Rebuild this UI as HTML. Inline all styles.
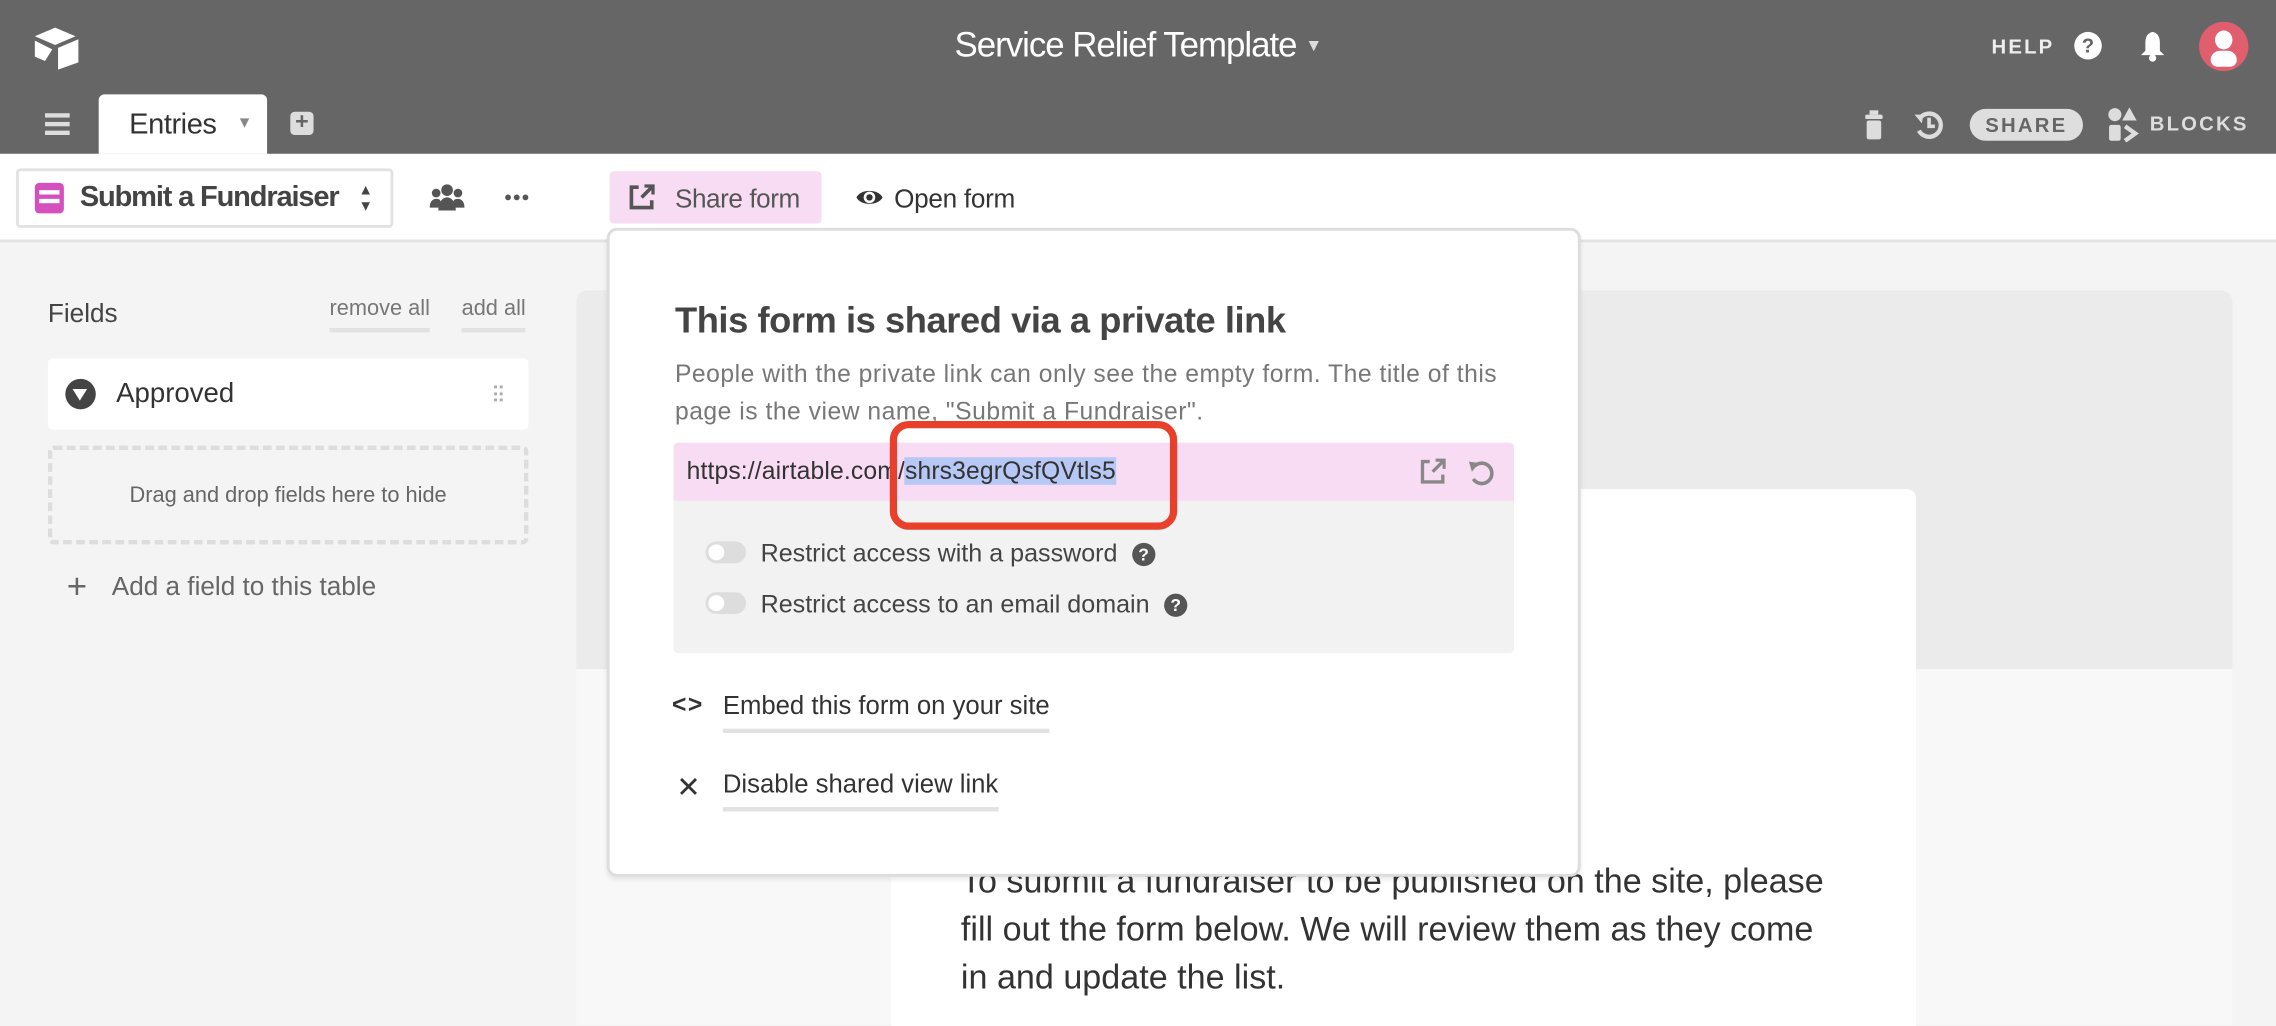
<!DOCTYPE html>
<html><head><meta charset="utf-8"><style>
*{margin:0;padding:0;box-sizing:border-box}
html,body{width:2276px;height:1024px;overflow:hidden;background:#f4f4f4}
#w{position:absolute;left:0;top:0;width:1568px;height:706px;transform:scale(1.45153);transform-origin:0 0;font-family:"Liberation Sans",sans-serif;color:#333}
.a{position:absolute;white-space:nowrap}
.q{display:inline-block;width:16px;height:16px;border-radius:50%;background:#555;color:#fff;font-size:12px;font-weight:bold;text-align:center;line-height:16px;margin-left:10px;vertical-align:1px;letter-spacing:0}
</style></head><body><div id="w">
<div class="a" style="left:0;top:0;width:1568px;height:106px;background:#666"></div>
<svg class="a" style="left:22px;top:18px" width="34" height="30" viewBox="0 0 34 30"><path d="M16 1 L30 7 L16 13 L2 7Z" fill="#fff"/><path d="M18 15 L32 9 V25 L18 30Z" fill="#fff"/><path d="M2 10 L14 16 L9 24 L2 21Z" fill="#fff"/></svg>
<div class="a" style="left:0;width:1568px;top:18px;text-align:center;color:#fff;font-size:24px;letter-spacing:-0.7px">Service Relief Template <span style="font-size:12px;color:#ddd;vertical-align:4px">▼</span></div>
<div class="a" style="left:1372px;top:24px;color:#eee;font-size:14px;font-weight:bold;letter-spacing:1.5px">HELP</div>
<div class="a" style="left:1429px;top:22px;width:19px;height:19px;border-radius:50%;background:#fff;color:#666;font-size:14px;font-weight:bold;text-align:center;line-height:19px">?</div>
<svg class="a" style="left:1474px;top:21px" width="18" height="22" viewBox="0 0 18 22"><path d="M9 1C5 2 4 5 4 9v5L1 17h16l-3-3V9c0-4-1-7-5-8z" fill="#fff"/><circle cx="9" cy="19" r="2.5" fill="#fff"/></svg>
<div class="a" style="left:1515px;top:15px;width:34px;height:34px;border-radius:50%;background:#e05e6e;overflow:hidden"><div class="a" style="left:11px;top:6px;width:12px;height:13px;border-radius:50%;background:#fff"></div><div class="a" style="left:8px;top:20px;width:18px;height:11px;border-radius:8px 8px 6px 6px;background:#fff"></div></div>
<div class="a" style="left:31px;top:78px;width:17px;height:3px;background:#ddd;box-shadow:0 6px 0 #ddd,0 12px 0 #ddd"></div>
<div class="a" style="left:68px;top:65px;width:116px;height:41px;background:#fff;border-radius:4px 4px 0 0"></div>
<div class="a" style="left:89px;top:75px;font-size:20px;color:#333;letter-spacing:-0.3px">Entries</div>
<div class="a" style="left:163px;top:79px;font-size:11px;color:#888">▼</div>
<div class="a" style="left:200px;top:77px;width:16px;height:16px;background:#ddd;border-radius:3px;color:#666;font-weight:bold;font-size:16px;line-height:16px;text-align:center">+</div>
<svg class="a" style="left:1284px;top:75px" width="14" height="22" viewBox="0 0 14 22"><rect x="4" y="1" width="6" height="3" fill="#ddd"/><rect x="1" y="4" width="12" height="3" rx="1" fill="#ddd"/><rect x="2" y="8" width="10" height="13" rx="1.5" fill="#ddd"/></svg>
<svg class="a" style="left:1318px;top:75px" width="22" height="22" viewBox="0 0 22 22"><path d="M5 6A8 8 0 1 1 4 15" stroke="#ddd" stroke-width="3" fill="none"/><path d="M1 4 L7 4 L6 10Z" fill="#ddd"/><path d="M11 6v6h4" stroke="#ddd" stroke-width="2.5" fill="none"/></svg>
<div class="a" style="left:1357px;top:75px;width:78px;height:22px;border-radius:11px;background:#dedede;color:#666;font-size:14px;font-weight:bold;letter-spacing:1.5px;text-align:center;line-height:22px">SHARE</div>
<svg class="a" style="left:1452px;top:74px" width="22" height="24" viewBox="0 0 22 24"><circle cx="5" cy="5" r="4.5" fill="#ddd"/><path d="M15 0l5 9h-10z" fill="#ddd"/><rect x="1" y="12" width="8" height="11" rx="1.5" fill="#ddd"/><path d="M12 13l7 5-7 5" stroke="#ddd" stroke-width="3" fill="none"/></svg>
<div class="a" style="left:1481px;top:77px;color:#ddd;font-size:14px;font-weight:bold;letter-spacing:1.5px">BLOCKS</div>
<div class="a" style="left:0;top:106px;width:1568px;height:61px;background:#fff;border-bottom:2px solid #e2e2e2"></div>
<div class="a" style="left:11px;top:116px;width:260px;height:41px;border:2px solid #e2e2e2;border-radius:3px;background:#fff"></div>
<div class="a" style="left:24px;top:126px;width:20px;height:21px;border-radius:3px;background:#d54fbd"><div class="a" style="left:3px;top:5px;width:14px;height:3px;background:#fff;box-shadow:0 6px 0 #fff"></div></div>
<div class="a" style="left:55px;top:125px;font-size:20px;font-weight:bold;color:#444;letter-spacing:-0.8px">Submit a Fundraiser</div>
<div class="a" style="left:247px;top:126px;font-size:10px;line-height:11px;color:#444">▲<br>▼</div>
<svg class="a" style="left:296px;top:126px" width="24" height="20" viewBox="0 0 24 20"><circle cx="12" cy="5" r="4" fill="#555"/><circle cx="4.5" cy="7" r="3" fill="#555"/><circle cx="19.5" cy="7" r="3" fill="#555"/><path d="M6 19c0-6 3-9 6-9s6 3 6 9z" fill="#555"/><path d="M0 17c0-4 2-6 4.5-6s3 1 3 2l-1 4z M24 17c0-4-2-6-4.5-6s-3 1-3 2l1 4z" fill="#555"/></svg>
<div class="a" style="left:348px;top:134px;width:16px;height:4px"><div class="a" style="left:0;top:0;width:4px;height:4px;border-radius:50%;background:#555;box-shadow:6px 0 0 #555,12px 0 0 #555"></div></div>
<div class="a" style="left:420px;top:118px;width:146px;height:36px;background:#f7dcf4;border-radius:3px"></div>
<svg class="a" style="left:433px;top:127px" width="18" height="18" viewBox="0 0 18 18"><path d="M7 2H2v14h14v-5" stroke="#555" stroke-width="2.5" fill="none"/><path d="M9 9l7-7M11 1h6v6" stroke="#555" stroke-width="2.5" fill="none"/></svg>
<div class="a" style="left:465px;top:127px;font-size:18px;color:#555;letter-spacing:-0.3px">Share form</div>
<svg class="a" style="left:589px;top:128px" width="20" height="16" viewBox="0 0 20 16"><path d="M1 8C4 2 16 2 19 8C16 14 4 14 1 8Z" fill="#333"/><circle cx="10" cy="8" r="4" fill="#fff"/><circle cx="10" cy="8" r="2.2" fill="#333"/></svg>
<div class="a" style="left:616px;top:127px;font-size:18px;color:#333;letter-spacing:-0.2px">Open form</div>
<div class="a" style="left:33px;top:206px;font-size:18px;color:#444">Fields</div>
<div class="a" style="left:227px;top:204px;font-size:15px;color:#777;border-bottom:3px solid #e2e2e2;padding-bottom:5px">remove all</div>
<div class="a" style="left:318px;top:204px;font-size:15px;color:#777;border-bottom:3px solid #e2e2e2;padding-bottom:5px">add all</div>
<div class="a" style="left:33px;top:247px;width:331px;height:49px;background:#fff;border-radius:3px"></div>
<div class="a" style="left:45px;top:261px;width:21px;height:21px;border-radius:50%;background:#444"><div class="a" style="left:5px;top:7px;border-left:5.5px solid transparent;border-right:5.5px solid transparent;border-top:8px solid #fff"></div></div>
<div class="a" style="left:80px;top:261px;font-size:19px;color:#333">Approved</div>
<div class="a" style="left:340px;top:265px;font-size:8px;line-height:4.5px;color:#aaa;letter-spacing:1px">▪▪<br>▪▪<br>▪▪</div>
<div class="a" style="left:33px;top:307px;width:331px;height:68px;border:3px dashed #ddd;border-radius:4px;text-align:center;line-height:64px;font-size:15px;color:#666">Drag and drop fields here to hide</div>
<div class="a" style="left:46px;top:391px;font-size:24px;color:#666;font-weight:300">+</div>
<div class="a" style="left:77px;top:394px;font-size:18px;color:#666">Add a field to this table</div>
<div class="a" style="left:397px;top:200px;width:1141px;height:506px;background:#f8f8f8;border-radius:8px 8px 0 0"></div>
<div class="a" style="left:397px;top:200px;width:1141px;height:261px;background:#ebebeb;border-radius:8px 8px 0 0"></div>
<div class="a" style="left:614px;top:337px;width:706px;height:370px;background:#fff;border-radius:6px 6px 0 0"></div>
<div class="a" style="left:662px;top:591px;font-size:23.5px;line-height:33px;color:#333;letter-spacing:0;white-space:normal;width:610px">To submit a fundraiser to be published on the site, please fill out the form below. We will review them as they come in and update the list.</div>
<div class="a" style="left:418px;top:157px;width:671px;height:447px;background:#fff;border:2px solid #ddd;border-radius:7px;box-shadow:0 2px 3px rgba(0,0,0,.08)"></div>
<div class="a" style="left:465px;top:207px;font-size:25px;font-weight:bold;color:#444;letter-spacing:-0.3px">This form is shared via a private link</div>
<div class="a" style="left:465px;top:245px;font-size:17px;line-height:26px;color:#777;letter-spacing:0.35px">People with the private link can only see the empty form. The title of this<br>page is the view name, "Submit a Fundraiser".</div>
<div class="a" style="left:464px;top:305px;width:579px;height:145px;background:#f2f2f2;border-radius:3px"></div>
<div class="a" style="left:464px;top:305px;width:579px;height:40px;background:#f7dcf4;border-radius:3px 3px 0 0"></div>
<div class="a" style="left:473px;top:315px;font-size:17px;color:#333;letter-spacing:0.1px">https://airtable.com/<span style="background:#b7c8f5">shrs3egrQsfQVtls5</span></div>
<svg class="a" style="left:978px;top:316px" width="18" height="18" viewBox="0 0 18 18"><path d="M7 2H2v14h14v-5" stroke="#888" stroke-width="2.3" fill="none"/><path d="M9 9l7-7M11 1h6v6" stroke="#888" stroke-width="2.3" fill="none"/></svg>
<svg class="a" style="left:1011px;top:315px" width="18" height="20" viewBox="0 0 18 20"><path d="M5 6A7 7 0 1 1 4 15" stroke="#888" stroke-width="2.5" fill="none"/><path d="M1 3L8 4L3 10Z" fill="#888"/></svg>
<div class="a" style="left:613px;top:290px;width:198px;height:75px;border:5px solid #e8402a;border-radius:13px"></div>
<div class="a" style="left:486px;top:373px;width:28px;height:15px;border-radius:8px;background:#ddd"><div class="a" style="left:2px;top:2px;width:11px;height:11px;border-radius:50%;background:#fff"></div></div>
<div class="a" style="left:524px;top:371px;font-size:17.3px;color:#444">Restrict access with a password<span class="q">?</span></div>
<div class="a" style="left:486px;top:408px;width:28px;height:15px;border-radius:8px;background:#ddd"><div class="a" style="left:2px;top:2px;width:11px;height:11px;border-radius:50%;background:#fff"></div></div>
<div class="a" style="left:524px;top:406px;font-size:17.3px;color:#444">Restrict access to an email domain<span class="q">?</span></div>
<div class="a" style="left:463px;top:476px;font-size:17px;font-weight:bold;color:#333;letter-spacing:1px">&lt;&gt;</div>
<div class="a" style="left:498px;top:476px;font-size:17.7px;color:#333;border-bottom:3px solid #e2e2e2;padding-bottom:5px">Embed this form on your site</div>
<div class="a" style="left:466px;top:530px;font-size:20px;color:#333">✕</div>
<div class="a" style="left:498px;top:530px;font-size:17.7px;color:#333;border-bottom:3px solid #e2e2e2;padding-bottom:5px">Disable shared view link</div>
</div></body></html>
